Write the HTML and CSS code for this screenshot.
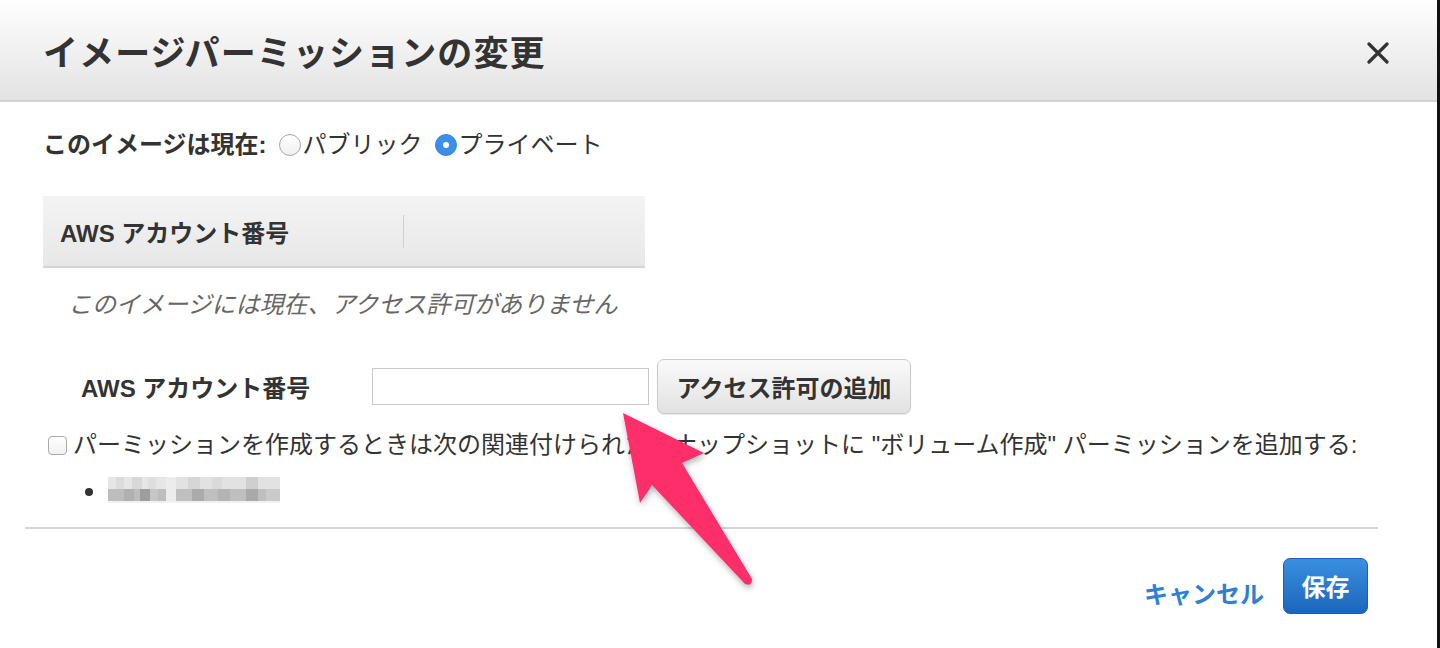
FILE: index.html
```html
<!DOCTYPE html>
<html lang="ja">
<head>
<meta charset="utf-8">
<title>イメージパーミッションの変更</title>
<link rel="stylesheet" href="styles.css">
</head>
<body>
<div class="dialog">
  <header class="dlg-header">
    <h1 class="dlg-title">イメージパーミッションの変更</h1>
    <span class="close" aria-label="閉じる">
      <svg width="22" height="22" viewBox="0 0 22 22"><path d="M2 2 L20 20 M20 2 L2 20" stroke="#333" stroke-width="3.2" stroke-linecap="round" fill="none"/></svg>
    </span>
  </header>
  <div class="dlg-body">
    <div class="status">
      <span class="status-label">このイメージは現在:</span>
      <span class="radio"></span><span class="radio-text">パブリック</span>
      <span class="radio checked"></span><span class="radio-text">プライベート</span>
    </div>
    <div class="table-head">
      <div class="th th-first">AWS アカウント番号</div>
      <div class="th-sep"></div>
    </div>
    <div class="empty">このイメージには現在、アクセス許可がありません</div>
    <div class="add-row">
      <span class="add-label">AWS アカウント番号</span>
      <span class="input"></span>
      <span class="btn">アクセス許可の追加</span>
    </div>
    <div class="check-row">
      <span class="checkbox"></span>
      <span class="check-text">パーミッションを作成するときは次の関連付けられたスナップショットに "ボリューム作成" パーミッションを追加する:</span>
    </div>
    <div class="bullet-row">
      <span class="dot"></span>
      <svg class="blur" width="172" height="26" viewBox="0 0 172 26">
        <rect x="0" y="0" width="58" height="12" fill="#e6e6e6"/>
        <rect x="8" y="0" width="8" height="12" fill="#dcdcdc"/>
        <rect x="24" y="0" width="10" height="12" fill="#d8d8d8"/>
        <rect x="40" y="0" width="8" height="12" fill="#dedede"/>
        <rect x="0" y="12" width="58" height="12" fill="#bdbdbd"/>
        <rect x="16" y="12" width="10" height="12" fill="#b0b0b0"/>
        <rect x="32" y="12" width="10" height="12" fill="#9e9e9e"/>
        <rect x="42" y="12" width="8" height="12" fill="#c6c6c6"/>
        <rect x="58" y="0" width="10" height="24" fill="#ececec"/>
        <rect x="68" y="0" width="104" height="12" fill="#e2e2e2"/>
        <rect x="80" y="0" width="12" height="12" fill="#d6d6d6"/>
        <rect x="104" y="0" width="10" height="12" fill="#dadada"/>
        <rect x="138" y="0" width="12" height="12" fill="#cfcfcf"/>
        <rect x="68" y="12" width="104" height="12" fill="#bfbfbf"/>
        <rect x="84" y="12" width="12" height="12" fill="#ababab"/>
        <rect x="110" y="12" width="12" height="12" fill="#b4b4b4"/>
        <rect x="138" y="12" width="12" height="12" fill="#a9a9a9"/>
        <rect x="158" y="12" width="14" height="12" fill="#cacaca"/>
        <rect x="0" y="24" width="172" height="2" fill="#f1f1f1"/>
      </svg>
    </div>
  </div>
  <div class="divider"></div>
  <footer class="dlg-footer">
    <span class="cancel">キャンセル</span>
    <span class="save">保存</span>
  </footer>
  <svg class="arrow" width="1440" height="648" viewBox="0 0 1440 648">
    <defs>
      <filter id="sh" x="-20%" y="-20%" width="140%" height="140%">
        <feDropShadow dx="1" dy="3" stdDeviation="3" flood-color="#000" flood-opacity="0.3"/>
      </filter>
    </defs>
    <path d="M623 413 L704 453 L682 463 L752 579 Q752 587 745 584 L652 485 L640 503 Z" fill="#fe2d6b" filter="url(#sh)"/>
  </svg>
</div>
</body>
</html>
```
FILE: styles.css
```css
* { box-sizing: border-box; }
html, body { margin: 0; padding: 0; background: #fff; }
body {
  font-family: "Liberation Sans", "Noto Sans CJK JP", sans-serif;
  color: #333;
}
.dialog {
  position: relative;
  width: 1440px;
  height: 648px;
  border-right: 3px solid #111;
  overflow: hidden;
  display: flex;
  flex-direction: column;
}
.dlg-header {
  height: 102px;
  flex: none;
  background: linear-gradient(#fefefe, #e3e3e3);
  border-bottom: 2px solid #d2d2d2;
  display: flex;
  align-items: center;
  justify-content: space-between;
  padding: 0 48px 0 43px;
}
.dlg-title {
  margin: 0;
  font-size: 35px;
  letter-spacing: 1.1px;
  font-weight: bold;
  color: #333;
  line-height: 1;
  padding-top: 6px;
}
.close { display: flex; margin-top: 6px; }
.dlg-body {
  padding: 26px 0 0 43px;
  display: flex;
  flex-direction: column;
  font-size: 24px;
}
.status {
  display: flex;
  align-items: center;
  height: 34px;
  line-height: 34px;
}
.status-label { font-weight: bold; margin-right: 12px; }
.radio {
  width: 22px;
  height: 22px;
  border-radius: 50%;
  border: 1px solid #a8a8a8;
  background: linear-gradient(#fff, #f0f0f0);
  margin-right: 2px;
  position: relative;
}
.radio.checked {
  background: #3c8fe8;
  border-color: #3a86d6;
}
.radio.checked::after {
  content: "";
  position: absolute;
  left: 7px;
  top: 7px;
  width: 6px;
  height: 6px;
  border-radius: 50%;
  background: #fff;
}
.radio-text { margin-right: 12px; }
.table-head {
  margin-top: 34px;
  width: 602px;
  height: 72px;
  background: linear-gradient(#f4f4f4, #e7e7e7);
  border-bottom: 2px solid #d4d4d4;
  display: flex;
  align-items: center;
}
.th-first {
  width: 360px;
  padding-left: 17px;
  font-weight: bold;
}
.th-sep {
  width: 1px;
  height: 33px;
  background: #cfcfcf;
}
.empty {
  margin-top: 20px;
  padding-left: 25px;
  line-height: 34px;
  font-style: italic;
  color: #666;
}
.add-row {
  margin-top: 37px;
  display: flex;
  align-items: center;
  height: 54px;
}
.add-label {
  width: 329px;
  padding-left: 38px;
  font-weight: bold;
}
.input {
  width: 277px;
  height: 37px;
  border: 1px solid #c8c8c8;
  background: #fff;
}
.btn {
  margin-left: 8px;
  width: 254px;
  height: 55px;
  border: 1px solid #c9c9c9;
  border-radius: 7px;
  background: linear-gradient(#fafafa, #e2e2e2);
  display: flex;
  align-items: center;
  justify-content: center;
  font-weight: bold;
  box-shadow: 0 1px 1px rgba(0,0,0,0.08);
}
.check-row {
  margin-top: 15px;
  display: flex;
  align-items: center;
  height: 34px;
  line-height: 34px;
}
.checkbox {
  margin-left: 5px;
  margin-right: 6px;
  width: 19px;
  height: 19px;
  border: 1px solid #a9a9a9;
  border-radius: 4px;
  background: linear-gradient(#fff, #f1f1f1);
}
.bullet-row {
  margin-top: 11px;
  height: 34px;
  display: flex;
  align-items: center;
  padding-left: 42px;
}
.dot {
  width: 8px;
  height: 8px;
  border-radius: 50%;
  background: #333;
  margin-right: 15px;
  margin-top: 4px;
}
.blur { display: block; }
.divider {
  margin: 20px 59px 0 25px;
  height: 2px;
  background: #d6d6d6;
  flex: none;
}
.dlg-footer {
  margin-top: 29px;
  display: flex;
  justify-content: flex-end;
  align-items: center;
  padding-right: 69px;
}
.cancel {
  font-size: 24px;
  font-weight: bold;
  color: #2f7fd4;
  margin-right: 19px;
  margin-top: 12px;
}
.save {
  width: 85px;
  height: 56px;
  border-radius: 7px;
  border: 1px solid #1c5fae;
  background: linear-gradient(#3a8fe0, #1b66bc);
  color: #fff;
  font-size: 24px;
  font-weight: bold;
  display: flex;
  align-items: center;
  justify-content: center;
  padding-bottom: 2px;
}
.arrow {
  position: absolute;
  left: 0;
  top: 0;
  pointer-events: none;
}
```
